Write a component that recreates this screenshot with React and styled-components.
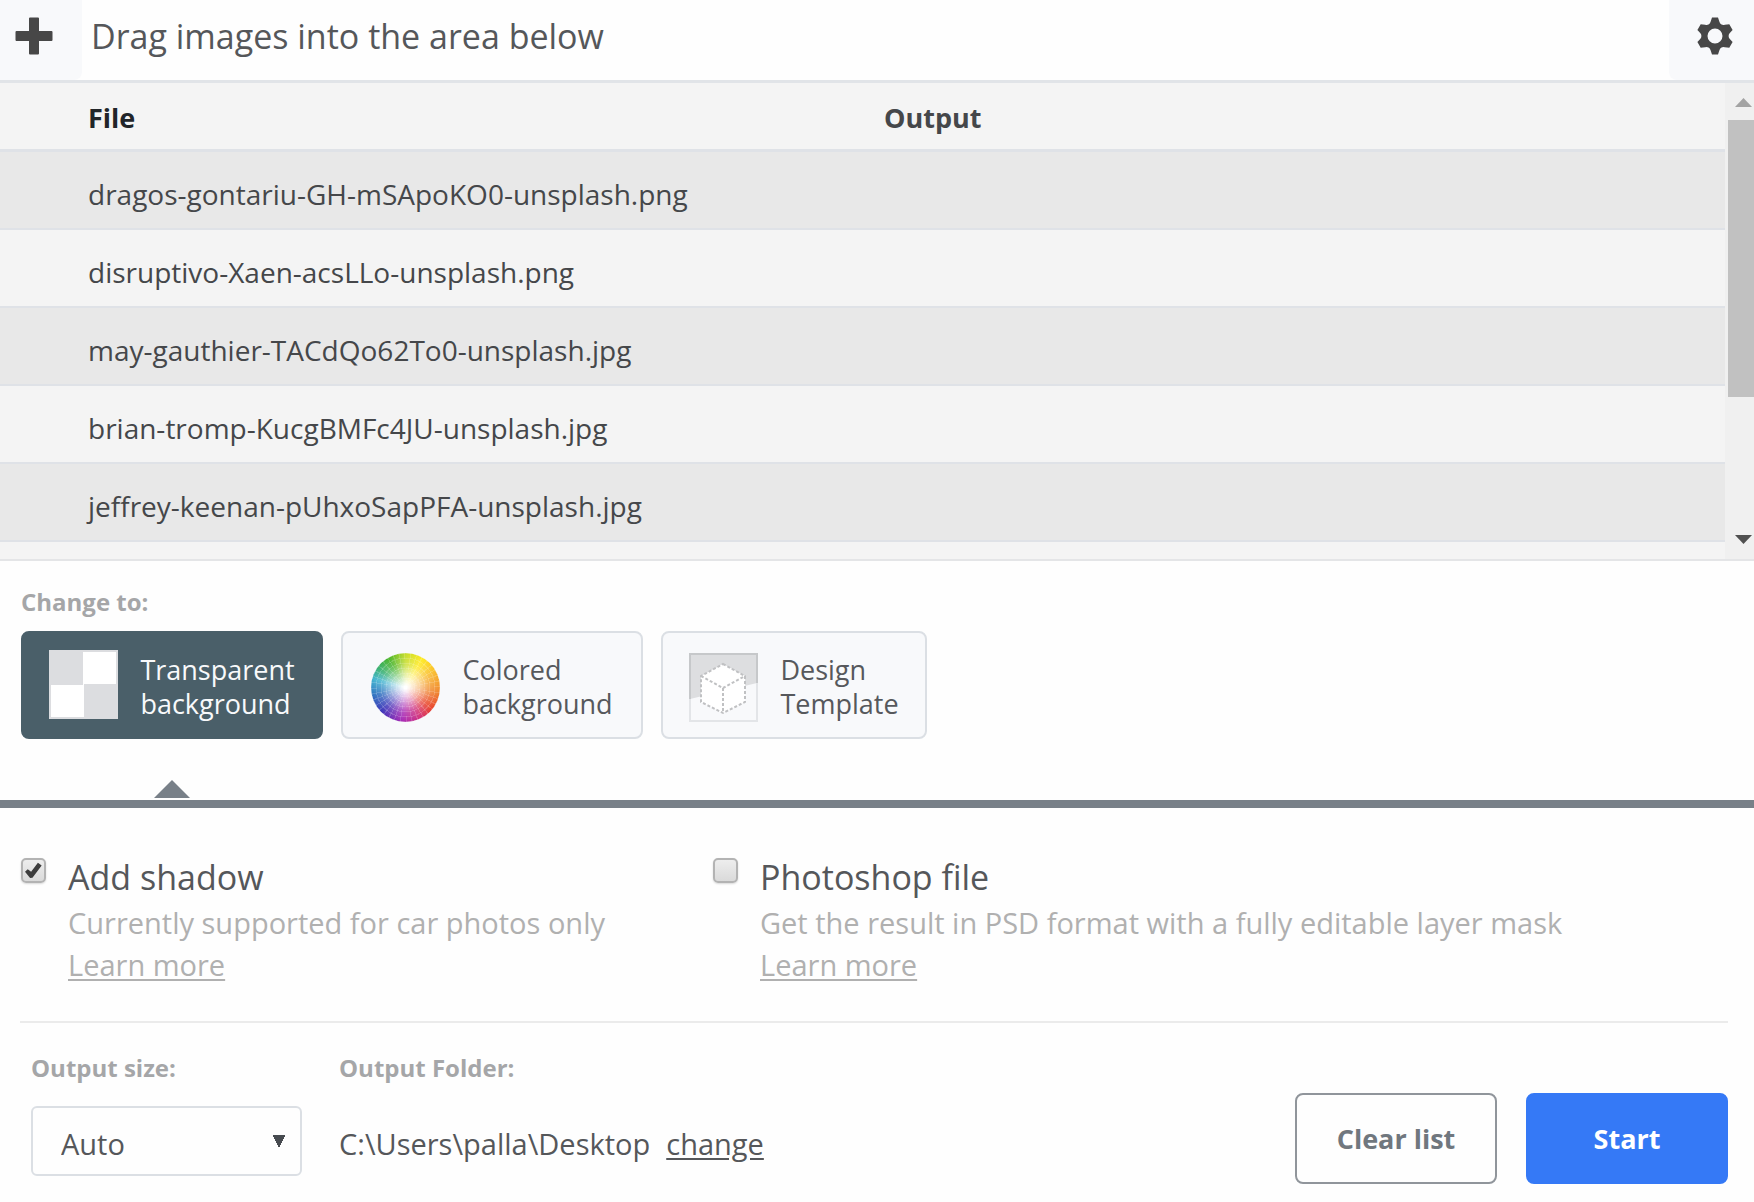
import React, { useState } from 'react'
import styled, { createGlobalStyle } from 'styled-components'

const files = [
  'dragos-gontariu-GH-mSApoKO0-unsplash.png',
  'disruptivo-Xaen-acsLLo-unsplash.png',
  'may-gauthier-TACdQo62To0-unsplash.jpg',
  'brian-tromp-KucgBMFc4JU-unsplash.jpg',
  'jeffrey-keenan-pUhxoSapPFA-unsplash.jpg',
]

const PlusIcon = () => (
  <svg width="38" height="38" viewBox="0 0 38 38" aria-hidden="true">
    <path
      fill="#474747"
      d="M15 0.5h8q1 0 1 1V14h12.500q1 0 1 1v8q0 1-1 1H24v12.500q0 1-1 1h-8q-1 0-1-1V24H1.500q-1 0-1-1v-8q0-1 1-1H14V1.500q0-1 1-1z"
    />
  </svg>
)

const CogIcon = () => (
  <svg width="38" height="38" viewBox="0 0 38 38" aria-hidden="true">
    <path
      fill="#474747"
      fillRule="evenodd"
      d="M16 .5h6l1.500 4.500q.5 1.800 2 2.600t3.300.2l4.500-.6 3.300 5.700-3 3.300q-1 1.300-1 2.800t1 2.800l3 3.300-3.300 5.700-4.500-.6q-1.800-.6-3.300.2t-2 2.600L22 37.500h-6L14.500 33q-.5-1.800-2-2.600t-3.300-.2l-4.500.6-3.300-5.700 3-3.300q1-1.300 1-2.800t-1-2.800l-3-3.300 3.300-5.700 4.500.6q1.800.6 3.300-.2t2-2.600zM19 11.500a7.500 7.500 0 1 0 0 15 7.500 7.500 0 0 0 0-15z"
    />
  </svg>
)

const CubeIcon = () => (
  <svg width="69" height="69" viewBox="0 0 69 69" aria-hidden="true">
    <path d="M1 1h67v29L1 46z" fill="#dddee0" />
    <rect x="1" y="1" width="67" height="67" fill="none" stroke="#e3e5e8" strokeWidth="2" />
    <path d="M1 46V1h67v29" fill="none" stroke="#c6c8ca" strokeWidth="2" />
    <path d="M34 11l22 12v26L34 60 12 49V23z" fill="#fff" />
    <path
      d="M34 11l22 12v26L34 60 12 49V23zM12 23l22 12 22-12M34 35v25"
      fill="none"
      stroke="#c0c1c3"
      strokeWidth="2"
      strokeDasharray="3 2"
    />
  </svg>
)

const App = () => {
  const [mode, setMode] = useState('transparent')

  const modes = [
    { id: 'transparent', lines: ['Transparent', 'background'], icon: <Checker />, width: 302 },
    { id: 'colored', lines: ['Colored', 'background'], icon: <Wheel />, width: 302 },
    { id: 'design', lines: ['Design', 'Template'], icon: <CubeIcon />, width: 266 },
  ]

  return (
    <Page>
      <GlobalStyle />
      <Toolbar>
        <ToolButton $side="left" aria-label="Add images"><PlusIcon /></ToolButton>
        <Title>Drag images into the area below</Title>
        <ToolButton $side="right" aria-label="Settings"><CogIcon /></ToolButton>
      </Toolbar>

      <FileArea>
        <Viewport>
          <FileTable>
            <thead>
              <tr>
                <th>File</th>
                <th>Output</th>
              </tr>
            </thead>
            <tbody>
              {files.map(file => (
                <tr key={file}>
                  <td>{file}</td>
                  <td></td>
                </tr>
              ))}
            </tbody>
          </FileTable>
        </Viewport>
        <Scrollbar aria-hidden="true">
          <Arrow $up />
          <Thumb />
          <Arrow />
        </Scrollbar>
      </FileArea>

      <ModeSection>
        <SmallLabel as="h2">Change to:</SmallLabel>
        <ModeList>
          {modes.map(({ id, lines, icon, width }) => (
            <ModeItem key={id}>
              <ModeButton
                type="button"
                $active={mode === id}
                $width={width}
                aria-pressed={mode === id}
                onClick={() => setMode(id)}
              >
                {icon}
                <span>{lines[0]}<br />{lines[1]}</span>
              </ModeButton>
              {mode === id && <Pointer />}
            </ModeItem>
          ))}
        </ModeList>
      </ModeSection>

      <Options>
        <Option>
          <CheckBox id="shadow" defaultChecked />
          <div>
            <OptionName htmlFor="shadow">Add shadow</OptionName>
            <Hint>Currently supported for car photos only</Hint>
            <LearnMore href="#shadow">Learn more</LearnMore>
          </div>
        </Option>
        <Option>
          <CheckBox id="psd" />
          <div>
            <OptionName htmlFor="psd">Photoshop file</OptionName>
            <Hint>Get the result in PSD format with a fully editable layer mask</Hint>
            <LearnMore href="#psd">Learn more</LearnMore>
          </div>
        </Option>
      </Options>

      <Footer>
        <Field>
          <SmallLabel htmlFor="size">Output size:</SmallLabel>
          <Select id="size" defaultValue="Auto">
            <option>Auto</option>
            <option>Full</option>
          </Select>
        </Field>
        <Field>
          <SmallLabel as="span">Output Folder:</SmallLabel>
          <Folder>
            <span>C:\Users\palla\Desktop</span>
            <a href="#change">change</a>
          </Folder>
        </Field>
        <Actions>
          <ActionButton type="button">Clear list</ActionButton>
          <ActionButton type="button" $primary>Start</ActionButton>
        </Actions>
      </Footer>
    </Page>
  )
}

const GlobalStyle = createGlobalStyle`
  * {
    box-sizing: border-box;
  }

  body {
    margin: 0;
    background: #fefefe;
    color: #55575a;
    font-family: "Open Sans", "Noto Sans", sans-serif;
    font-size: 27px;
  }

  button, select, input {
    font: inherit;
    color: inherit;
  }
`

const Page = styled.main`
  display: flex;
  flex-direction: column;
  min-height: 100vh;
`

const Toolbar = styled.header`
  display: flex;
  align-items: stretch;
  height: 83px;
  border-bottom: 3px solid #e1e4e8;
`

const ToolButton = styled.button`
  display: flex;
  align-items: center;
  justify-content: center;
  width: ${({ $side }) => ($side === 'left' ? 82 : 85)}px;
  padding: ${({ $side }) => ($side === 'left' ? '0 14px 8px 0' : '0 0 8px 6px')};
  border: 0;
  border-radius: ${({ $side }) => ($side === 'left' ? '0 0 8px 0' : '0 0 0 8px')};
  background: #f8f9fb;
`

const Title = styled.h1`
  flex: 1;
  margin: 0;
  padding-left: 9px;
  font-size: 34px;
  font-weight: 400;
  line-height: 72px;
`

const FileArea = styled.section`
  display: flex;
  height: 478px;
  border-bottom: 2px solid #e4e5e7;
  background: #f4f4f4;
`

const Viewport = styled.div`
  flex: 1;
  overflow: hidden;
`

const FileTable = styled.table`
  width: 100%;
  border-collapse: separate;
  border-spacing: 0;
  table-layout: fixed;
  color: #45474a;

  th, td {
    padding: 0;
    text-align: left;
  }

  th:first-child, td:first-child {
    width: 884px;
    padding-left: 88px;
  }

  th {
    height: 69px;
    padding-top: 2px;
    border-bottom: 3px solid #dfe2e7;
  }

  th:first-child {
    color: #212529;
  }

  td {
    height: 78px;
    padding-top: 8px;
    border-bottom: 2px solid #dfe2e7;
    font-size: 28px;
  }

  tbody tr:nth-child(odd) {
    background: #e8e8e8;
  }
`

const Scrollbar = styled.div`
  display: flex;
  flex-direction: column;
  width: 29px;
  padding: 15px 0 15px 3px;
  background: #f0f0f0;
`

const Arrow = styled.i`
  align-self: flex-end;
  width: 17px;
  height: 9px;
  margin-right: 2px;
  background: ${({ $up }) => ($up ? '#a3a3a3' : '#505050')};
  clip-path: ${({ $up }) => ($up ? 'polygon(50% 0, 100% 100%, 0 100%)' : 'polygon(0 0, 100% 0, 50% 100%)')};
`

const Thumb = styled.div`
  height: 277px;
  margin: 13px 0 auto;
  background: #c1c1c1;
`

const SmallLabel = styled.label`
  margin: 0;
  color: #a5a6a8;
  font-size: 24px;
  font-weight: 700;
  line-height: 32px;
`

const ModeSection = styled.section`
  display: flex;
  flex-direction: column;
  gap: 13px;
  height: 247px;
  padding: 25px 21px 0;
  border-bottom: 8px solid #788088;
`

const ModeList = styled.div`
  display: flex;
  gap: 18px;
`

const ModeItem = styled.div`
  display: flex;
  flex-direction: column;
  align-items: center;
`

const ModeButton = styled.button`
  display: flex;
  align-items: center;
  justify-content: center;
  gap: 22px;
  width: ${({ $width }) => $width}px;
  height: 108px;
  padding: 4px 0 0;
  border: 2px solid ${({ $active }) => ($active ? '#4a5f69' : '#dbdfe4')};
  border-radius: 8px;
  background: ${({ $active }) => ($active ? '#4a5f69' : '#f8f9fb')};
  color: ${({ $active }) => ($active ? '#f8f9fb' : '#56585c')};
  line-height: 34px;
  text-align: left;
`

const Pointer = styled.i`
  width: 36px;
  height: 18px;
  margin-top: 41px;
  background: #788088;
  clip-path: polygon(50% 0, 100% 100%, 0 100%);
`

const Checker = styled.i`
  width: 69px;
  height: 69px;
  margin-bottom: 6px;
  border: 2px solid #dcdde0;
  background: conic-gradient(#fff 25%, #dcdde0 0 50%, #fff 0 75%, #dcdde0 0);
`

const Wheel = styled.i`
  width: 69px;
  height: 69px;
  border-radius: 50%;
  background:
    radial-gradient(circle closest-side, #fff 4%, #ffffffa0 35%, #ffffff30 70%, #ffffff00 100%),
    repeating-radial-gradient(circle, #ffffff00 0 4px, #ffffff28 4px 5px),
    repeating-conic-gradient(#ffffff00 0 8deg, #ffffff28 8deg 10deg),
    conic-gradient(
      #c4dc28, #ffea20 30deg, #f8b62c 65deg, #f08a2c 95deg, #e8402c 130deg, #d0307c 155deg,
      #a828b4 185deg, #3c34b8 225deg, #2c78c0 260deg, #40b4d0 285deg, #38b070 305deg, #48b428 330deg, #c4dc28
    );
`

const Options = styled.section`
  display: grid;
  grid-template-columns: 692px 1fr;
  margin: 0 26px 0 20px;
  padding: 44px 0 35px;
  border-bottom: 2px solid #ebebeb;
`

const Option = styled.div`
  display: flex;
  align-items: flex-start;
  gap: 22px;
`

const CheckBox = styled.input.attrs({ type: 'checkbox' })`
  appearance: none;
  flex: none;
  width: 25px;
  height: 25px;
  margin: 6px 0 0 1px;
  border: 2px solid #b3b3b3;
  border-radius: 5px;
  background: linear-gradient(#ededed, #dadada);
  box-shadow: 0 1px 2px #00000026;

  &:checked::before {
    content: "";
    display: block;
    width: 17px;
    height: 17px;
    margin: 2px;
    background: #3d3d3d;
    clip-path: polygon(0 58%, 16% 42%, 36% 58%, 76% 4%, 98% 20%, 44% 92%, 30% 94%);
  }
`

const OptionName = styled.label`
  display: block;
  font-size: 34px;
  line-height: 50px;
`

const Hint = styled.p`
  margin: 0;
  color: #b0b0b0;
  font-size: 29px;
  line-height: 42px;
`

const LearnMore = styled.a`
  display: block;
  width: max-content;
  color: #b0b0b0;
  font-size: 29px;
  line-height: 42px;
  text-underline-offset: 3px;
`

const Footer = styled.footer`
  display: flex;
  align-items: flex-start;
  gap: 37px;
  padding: 29px 26px 20px 31px;
`

const Field = styled.div`
  display: flex;
  flex-direction: column;
  gap: 22px;
`

const Select = styled.select`
  appearance: none;
  width: 271px;
  height: 70px;
  padding: 4px 28px 0;
  border: 2px solid #dbdfe4;
  border-radius: 6px;
  background:
    conic-gradient(from -27deg at 50% 100%, #474b50 54deg, #ffffff00 0) right 14px top 27px / 14px 13px no-repeat,
    #fefefe;
  font-size: 29px;
`

const Folder = styled.div`
  display: flex;
  align-items: center;
  gap: 16px;
  height: 70px;
  padding-top: 4px;
  font-size: 29px;

  a {
    color: inherit;
    text-underline-offset: 3px;
  }
`

const Actions = styled.div`
  display: flex;
  gap: 29px;
  margin: 41px 0 0 auto;
`

const ActionButton = styled.button`
  width: 202px;
  height: 91px;
  border: 2px solid ${({ $primary }) => ($primary ? '#3579f6' : '#90959b')};
  border-radius: 8px;
  background: ${({ $primary }) => ($primary ? '#3579f6' : '#fefefe')};
  color: ${({ $primary }) => ($primary ? '#fff' : '#70777e')};
  font-weight: 700;
`

export default App
